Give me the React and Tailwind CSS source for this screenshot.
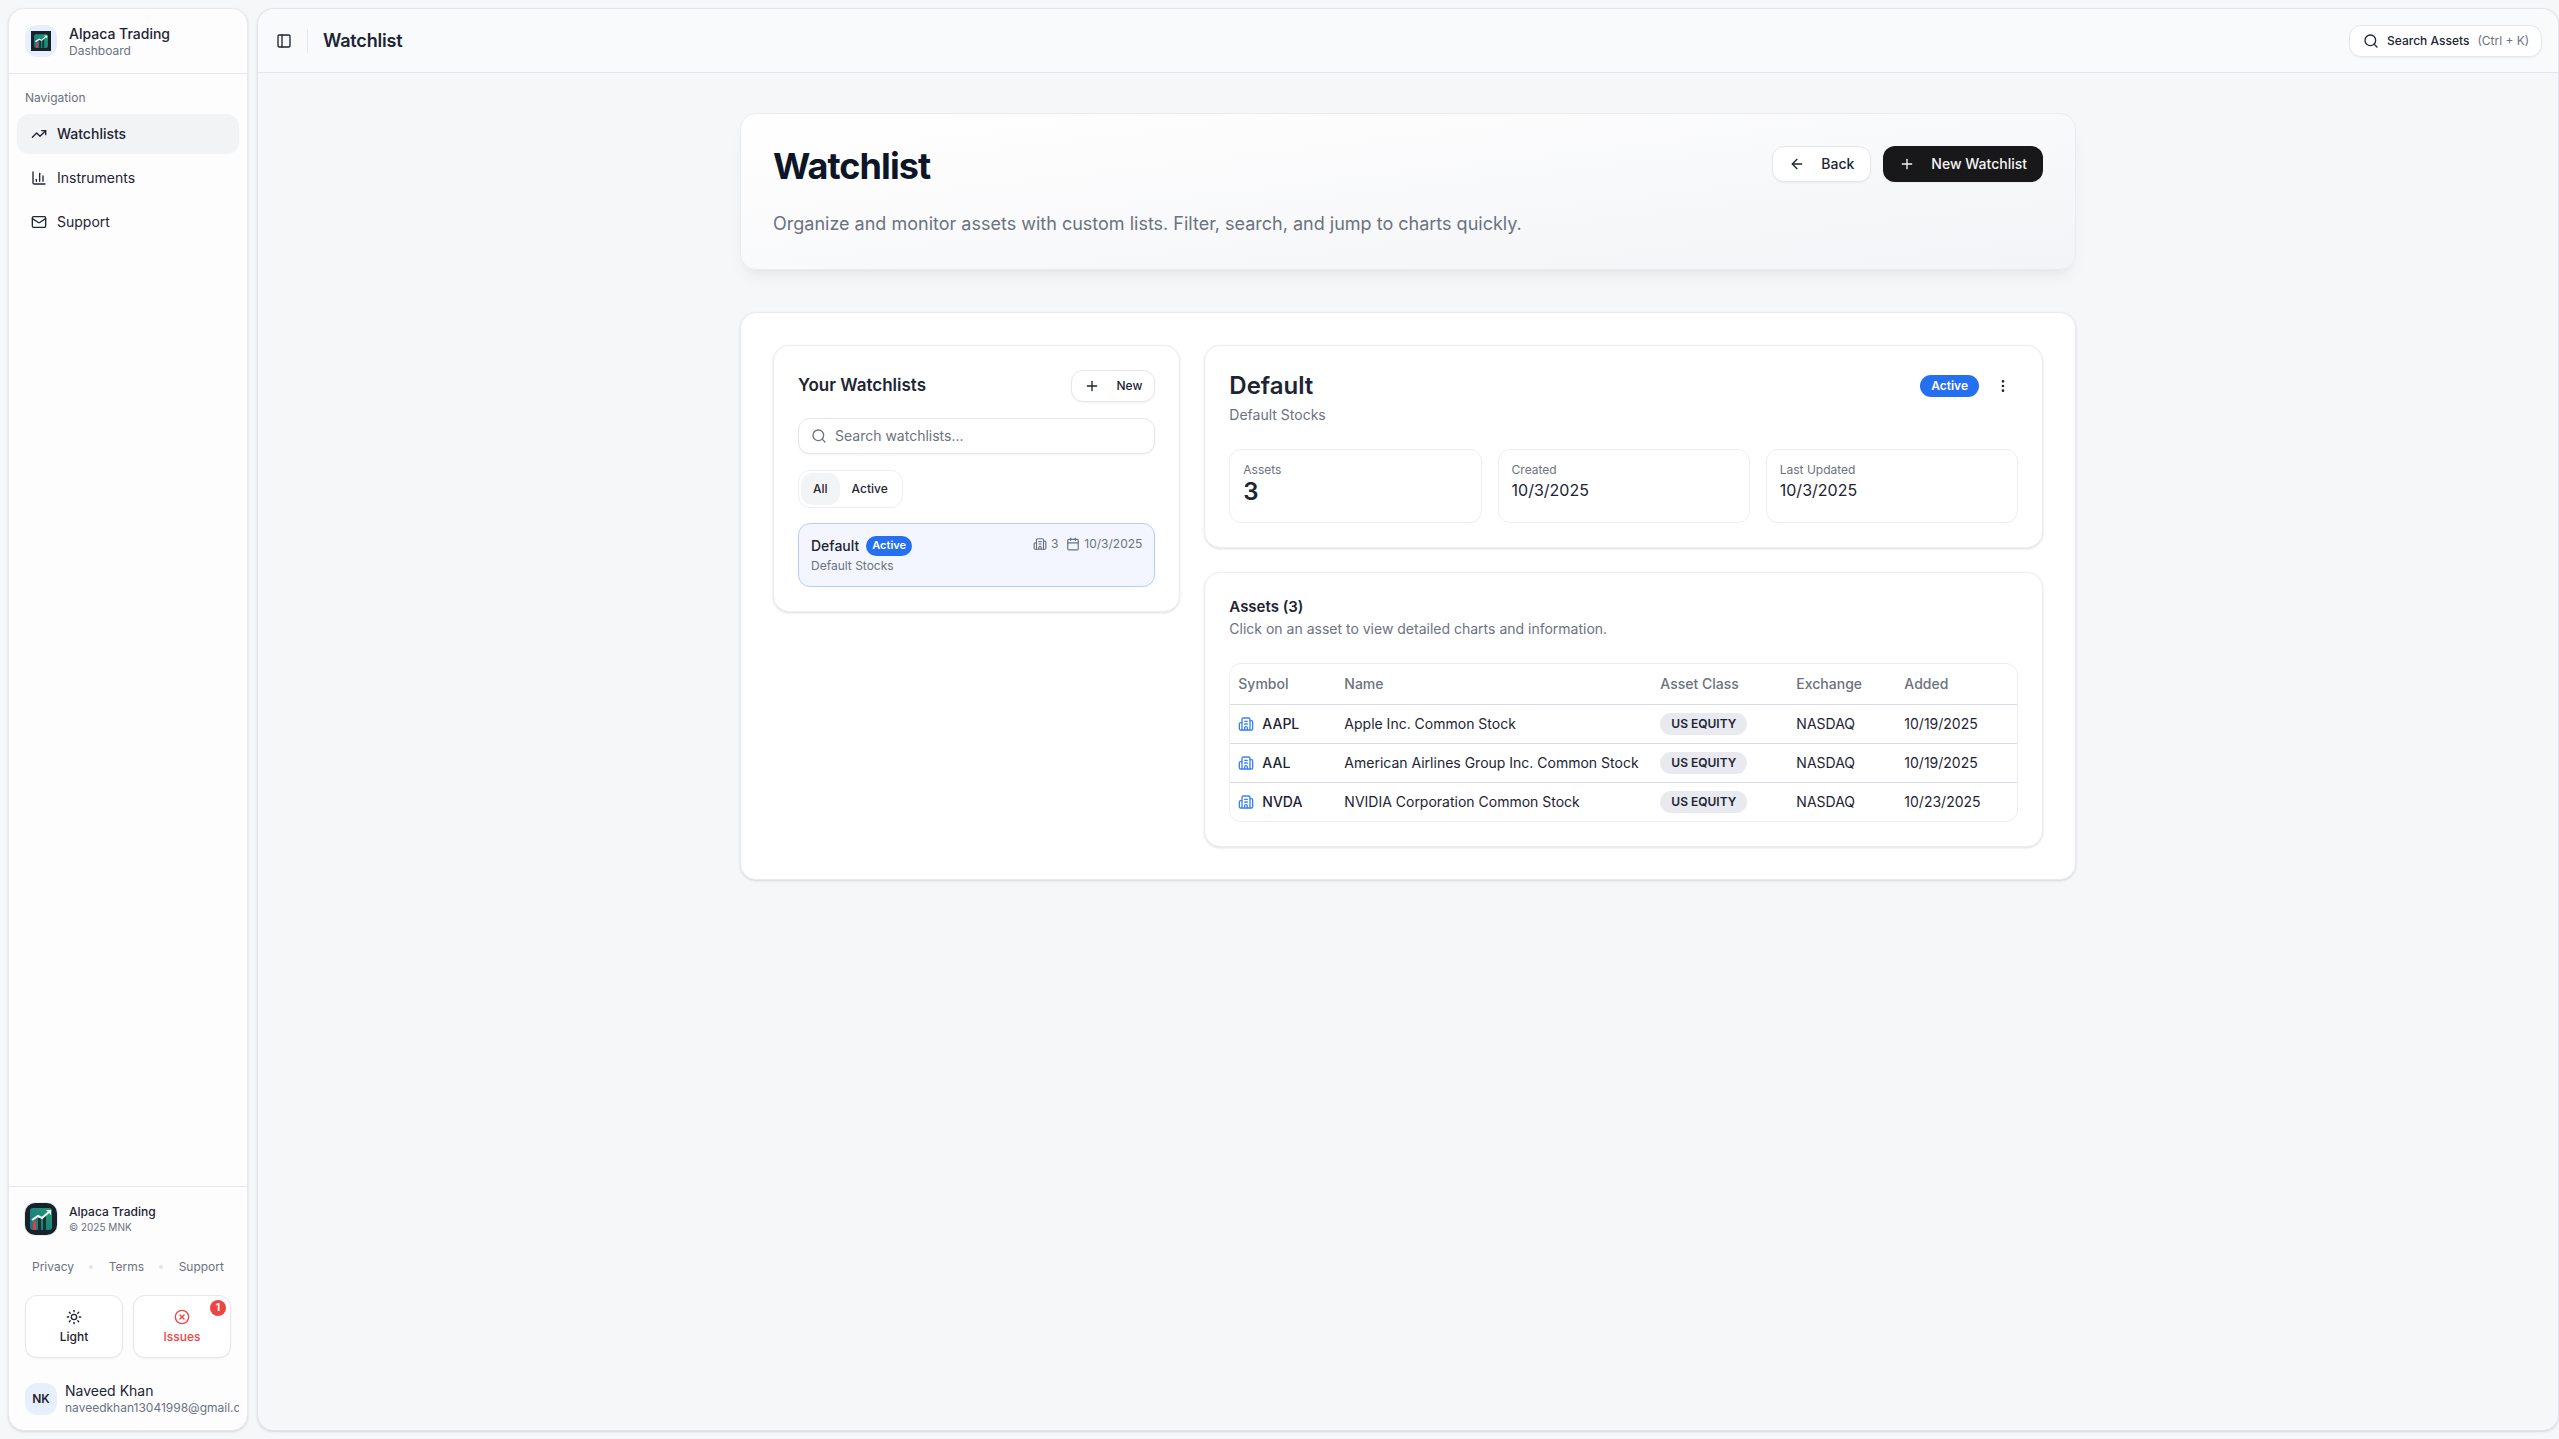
import React from "react";
import { TrendingUp, ChartColumn, Mail, PanelLeft, Search, Sun, CircleX, Plus, ArrowLeft, Building2, Calendar, EllipsisVertical } from "lucide-react";

function Logo({ size = 20 }) {
  return (
    <svg width={size} height={size} viewBox="0 0 32 32" className="block">
      <defs>
        <linearGradient id={`lg${size}`} x1="0" y1="1" x2="1" y2="0">
          <stop offset="0" stopColor="#1c6f8f" />
          <stop offset="1" stopColor="#1f9e6a" />
        </linearGradient>
      </defs>
      <rect width="32" height="32" fill="#17232b" />
      <rect x="5" y="5" width="22" height="22" rx="3" fill={`url(#lg${size})`} />
      <rect x="8" y="18" width="3" height="9" fill="#d8433c" />
      <rect x="13" y="15" width="3" height="12" fill="#17332f" />
      <rect x="18" y="13" width="3" height="14" fill="#17332f" />
      <path d="M7 17l6-4 4 2 7-6" stroke="#f2f7f5" strokeWidth="2" fill="none" />
      <path d="M21 7h5v5z" fill="#f2f7f5" />
    </svg>
  );
}

function NavItem({ icon: Icon, label, active }) {
  return (
    <div className={`flex h-10 items-center gap-[10px] rounded-xl px-[14px] text-sm ${active ? "bg-[#f2f3f5] font-medium" : ""} text-[#1d2433]`}>
      <Icon size={16} strokeWidth={2} />
      <span>{label}</span>
    </div>
  );
}

function Badge() {
  return <span className="inline-flex h-5 items-center rounded-full bg-[#2570f0] px-[6px] text-[11px] font-semibold text-white">Active</span>;
}

function Stat({ label, children }) {
  return (
    <div className="h-[74px] rounded-xl border border-[#eceef2] px-[13px] pt-[12px]">
      <div className="text-xs leading-4 text-[#6b7280]">{label}</div>
      {children}
    </div>
  );
}

const assets = [
  ["AAPL", "Apple Inc. Common Stock", "10/19/2025"],
  ["AAL", "American Airlines Group Inc. Common Stock", "10/19/2025"],
  ["NVDA", "NVIDIA Corporation Common Stock", "10/23/2025"],
];

export default function App() {
  return (
    <div className="flex h-screen gap-[9px] overflow-hidden bg-[#f6f7f9] py-[8px] pl-[8px] font-['Inter',sans-serif] text-[#1d2433]">
      <aside className="flex w-[240px] shrink-0 flex-col rounded-2xl border border-[#e6e8ee] bg-[#fdfdfe] shadow-sm">
        <div className="flex h-[65px] shrink-0 items-center gap-3 border-b border-[#e5e7eb] px-4">
          <div className="flex h-8 w-8 items-center justify-center rounded-xl bg-[#e8effc]">
            <Logo size={20} />
          </div>
          <div>
            <div className="text-sm leading-[19px] font-medium">Alpaca Trading</div>
            <div className="text-xs leading-4 text-[#6b7280]">Dashboard</div>
          </div>
        </div>
        <nav className="flex-1 px-2 pt-4">
          <div className="mb-[8px] px-2 text-xs leading-4 text-[#6b7280]">Navigation</div>
          <div className="flex flex-col gap-1">
            <NavItem icon={TrendingUp} label="Watchlists" active />
            <NavItem icon={ChartColumn} label="Instruments" />
            <NavItem icon={Mail} label="Support" />
          </div>
        </nav>
        <div className="shrink-0 border-t border-[#e5e7eb]">
          <div className="flex items-center gap-3 px-4 pt-4">
            <div className="h-8 w-8 overflow-hidden rounded-[10px] ring-1 ring-[#e8ebf0]">
              <Logo size={32} />
            </div>
            <div>
              <div className="text-xs leading-[16px] font-medium">Alpaca Trading</div>
              <div className="text-[10px] leading-[14px] text-[#6b7280]">© 2025 MNK</div>
            </div>
          </div>
          <div className="mt-[24px] flex items-center justify-between px-[23px] text-xs leading-4 text-[#6b7280]">
            <span>Privacy</span>
            <span className="h-1 w-1 rounded-full bg-[#dfe3ea]" />
            <span>Terms</span>
            <span className="h-1 w-1 rounded-full bg-[#dfe3ea]" />
            <span>Support</span>
          </div>
          <div className="mt-[20px] grid grid-cols-2 gap-[10px] px-4">
            <div className="flex h-[63px] flex-col items-center justify-center gap-1 rounded-xl border border-[#e5e7eb] bg-white text-xs font-medium shadow-xs">
              <Sun size={16} />
              <span>Light</span>
            </div>
            <div className="relative flex h-[63px] flex-col items-center justify-center gap-1 rounded-xl border border-[#e5e7eb] bg-white text-xs font-medium text-[#ef4444] shadow-xs">
              <CircleX size={16} />
              <span>Issues</span>
              <span className="absolute top-[4px] right-[4px] flex h-4 w-4 items-center justify-center rounded-full bg-[#ef4444] text-[10px] font-bold text-white">1</span>
            </div>
          </div>
          <div className="mt-[24px] mb-[14px] flex items-center gap-2 pl-4">
            <div className="flex h-8 w-8 shrink-0 items-center justify-center rounded-xl bg-[#e8effc] text-xs font-semibold">NK</div>
            <div className="min-w-0 flex-1 overflow-hidden pr-2">
              <div className="text-sm leading-[18px]">Naveed Khan</div>
              <div className="overflow-hidden text-xs leading-4 whitespace-nowrap text-[#6b7280]">naveedkhan13041998@gmail.com</div>
            </div>
          </div>
        </div>
      </aside>

      <main className="flex min-w-0 flex-1 flex-col rounded-2xl border border-[#e2e5eb] bg-[#f6f7f9] shadow-sm">
        <header className="flex h-[64px] shrink-0 items-center rounded-t-2xl border-b border-[#e2e5eb] bg-[#f9fafb] pr-[16px] pl-[18px]">
          <PanelLeft size={16} />
          <div className="mx-[15px] h-6 w-px bg-[#e5e7eb]" />
          <h1 className="text-lg font-semibold tracking-[-0.01em]">Watchlist</h1>
          <div className="ml-auto flex h-8 w-[193px] items-center gap-[8px] rounded-xl border border-[#e5e7eb] bg-white pl-[13px] shadow-xs">
            <Search size={16} />
            <span className="text-xs font-medium">Search Assets</span>
            <span className="text-xs text-[#6b7280]">(Ctrl + K)</span>
          </div>
        </header>

        <div className="mx-auto mt-[40px] flex w-[1336px] flex-col gap-[42px]">
          <section className="flex h-[157px] justify-between rounded-2xl border border-[#e9ebef] bg-gradient-to-br from-white to-[#f3f4f7] px-8 pt-[32px] shadow-lg shadow-[#0000000d]">
            <div>
              <h2 className="text-4xl leading-10 font-bold tracking-tight text-[#0d1526]">Watchlist</h2>
              <p className="mt-[24px] text-lg leading-7 text-[#6b7280]">Organize and monitor assets with custom lists. Filter, search, and jump to charts quickly.</p>
            </div>
            <div className="flex items-start gap-3">
              <div className="flex h-9 items-center gap-4 rounded-xl border border-[#e5e7eb] bg-white px-4 text-sm font-medium shadow-xs">
                <ArrowLeft size={16} />
                <span>Back</span>
              </div>
              <div className="flex h-9 items-center gap-4 rounded-xl bg-[#18181b] px-4 text-sm font-medium text-[#f4f4f5] shadow-xs">
                <Plus size={16} />
                <span>New Watchlist</span>
              </div>
            </div>
          </section>

          <section className="grid grid-cols-3 items-start gap-6 rounded-2xl border border-[#e9ebef] bg-white p-8 shadow-sm">
            <div className="rounded-2xl border border-[#eceef2] bg-white p-6 shadow-sm">
              <div className="flex items-center justify-between">
                <h3 className="text-[17px] font-semibold">Your Watchlists</h3>
                <div className="flex h-8 items-center gap-4 rounded-xl border border-[#e5e7eb] bg-white px-3 text-xs font-medium shadow-xs">
                  <Plus size={16} />
                  <span>New</span>
                </div>
              </div>
              <div className="mt-4 flex h-9 items-center gap-2 rounded-xl border border-[#e5e7eb] bg-white px-3 text-sm text-[#6b7280] shadow-xs">
                <Search size={16} />
                <span>Search watchlists...</span>
              </div>
              <div className="mt-4 inline-flex h-[38px] items-center rounded-xl border border-[#eceef2] bg-white p-[2px] text-xs font-medium">
                <span className="flex h-8 items-center rounded-xl bg-[#f3f4f6] px-3">All</span>
                <span className="px-3">Active</span>
              </div>
              <div className="mt-[15px] flex h-[64px] justify-between rounded-xl border border-[#b5cffb] bg-[#f3f6fe] px-3 pt-[12px]">
                <div>
                  <div className="flex items-center gap-[7px] text-sm font-medium">
                    Default <Badge />
                  </div>
                  <div className="mt-[2px] text-xs leading-4 text-[#6b7280]">Default Stocks</div>
                </div>
                <div className="-mt-[2px] flex h-5 items-center gap-2 text-xs text-[#6b7280]">
                  <span className="flex items-center gap-1"><Building2 size={14} />3</span>
                  <span className="flex items-center gap-1"><Calendar size={14} />10/3/2025</span>
                </div>
              </div>
            </div>

            <div className="col-span-2 flex flex-col gap-[24px]">
              <div className="rounded-2xl border border-[#eceef2] bg-white p-6 shadow-sm">
                <div className="flex items-start justify-between">
                  <div>
                    <h3 className="text-2xl leading-8 font-semibold">Default</h3>
                    <div className="mt-[3px] text-sm leading-5 text-[#6b7280]">Default Stocks</div>
                  </div>
                  <div className="mt-[5px] flex items-center gap-[16px] pr-[7px]">
                    <span className="inline-flex h-[22px] items-center rounded-full bg-[#2570f0] px-[11px] text-xs font-semibold text-white">Active</span>
                    <EllipsisVertical size={16} />
                  </div>
                </div>
                <div className="mt-[24px] grid grid-cols-3 gap-4">
                  <Stat label="Assets"><div className="text-2xl leading-7 font-semibold">3</div></Stat>
                  <Stat label="Created"><div className="text-base leading-6">10/3/2025</div></Stat>
                  <Stat label="Last Updated"><div className="text-base leading-6">10/3/2025</div></Stat>
                </div>
              </div>

              <div className="rounded-2xl border border-[#eceef2] bg-white p-6 shadow-sm">
                <h3 className="text-[15px] leading-5 font-semibold">Assets (3)</h3>
                <div className="mt-[2px] text-sm leading-5 text-[#6b7280]">Click on an asset to view detailed charts and information.</div>
                <div className="mt-[24px] overflow-hidden rounded-xl border border-[#eceef2]">
                  <table className="w-full table-fixed text-left text-sm">
                    <colgroup>
                      <col className="w-[106px]" />
                      <col className="w-[316px]" />
                      <col className="w-[136px]" />
                      <col className="w-[108px]" />
                      <col />
                    </colgroup>
                    <thead>
                      <tr className="h-[40px] border-b border-[#d7dce4] text-[#6b7280]">
                        <th className="px-2 font-medium">Symbol</th>
                        <th className="px-2 font-medium">Name</th>
                        <th className="px-2 font-medium">Asset Class</th>
                        <th className="px-2 font-medium">Exchange</th>
                        <th className="px-2 font-medium">Added</th>
                      </tr>
                    </thead>
                    <tbody>
                      {assets.map(([s, n, d], i) => (
                        <tr key={s} className={`h-[39px] ${i < 2 ? "border-b border-[#d7dce4]" : ""}`}>
                          <td className="px-2">
                            <span className="flex items-center gap-2 font-medium">
                              <Building2 size={16} className="text-[#3b82f6]" />
                              {s}
                            </span>
                          </td>
                          <td className="px-2 whitespace-nowrap">{n}</td>
                          <td className="px-2">
                            <span className="inline-flex h-[22px] items-center rounded-full bg-[#e8eaef] px-[11px] text-xs font-semibold">US EQUITY</span>
                          </td>
                          <td className="px-2">NASDAQ</td>
                          <td className="px-2">{d}</td>
                        </tr>
                      ))}
                    </tbody>
                  </table>
                </div>
              </div>
            </div>
          </section>
        </div>
      </main>
    </div>
  );
}
